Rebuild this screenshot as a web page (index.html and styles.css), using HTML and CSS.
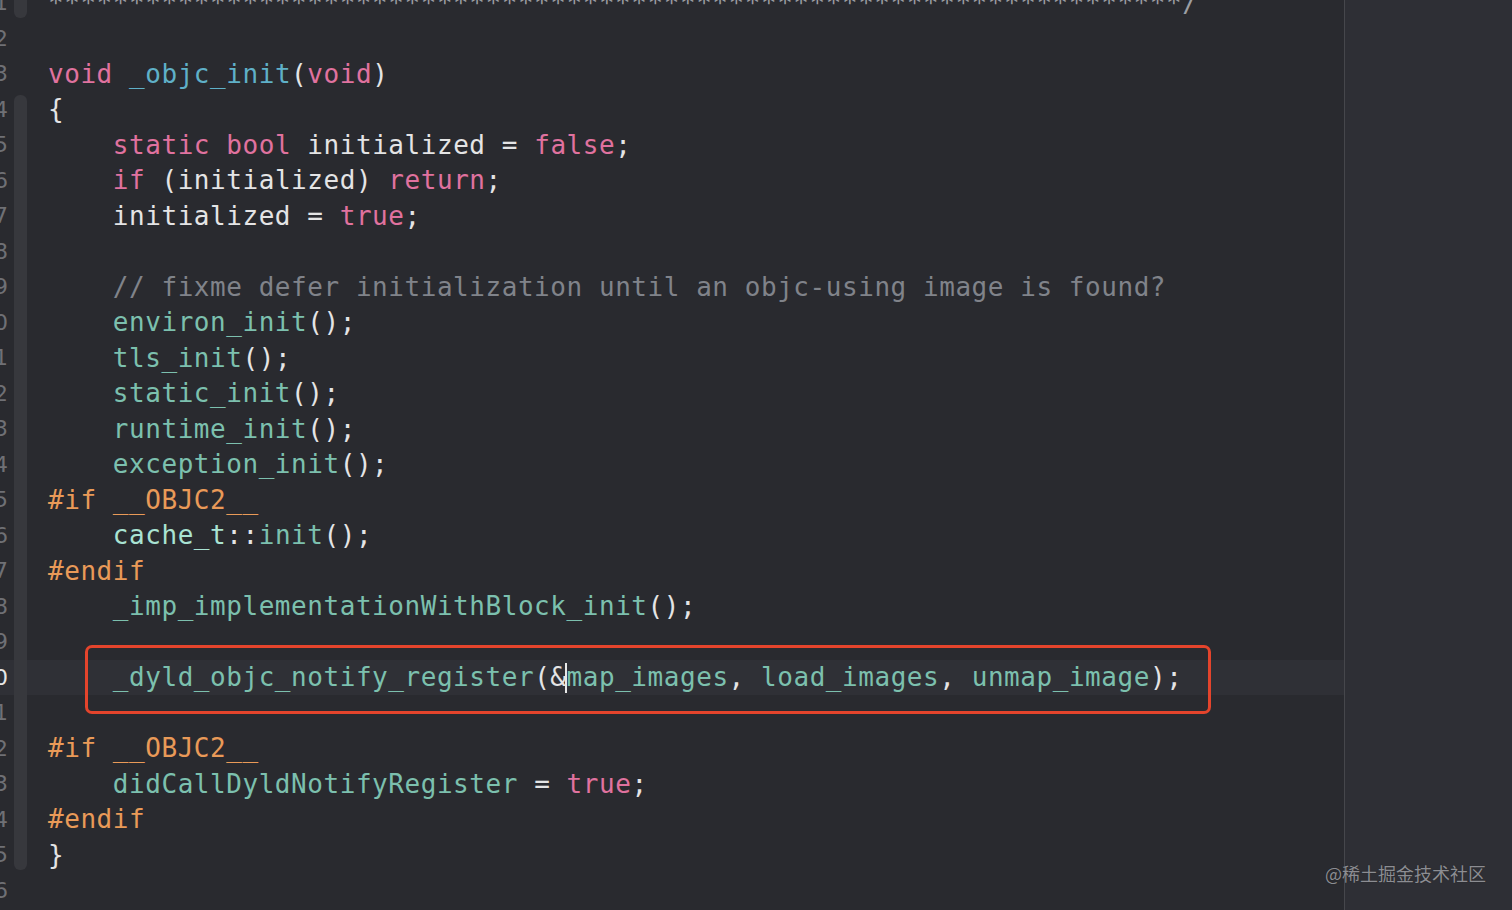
FILE: index.html
```html
<!DOCTYPE html>
<html lang="en">
<head>
<meta charset="utf-8">
<title>objc_init</title>
<link rel="stylesheet" href="styles.css">
</head>
<body>
<div class="editor">
  <div class="main">
    <div class="lines">
      <div class="row"><span class="ln">921</span><span class="fold tail"></span><span class="code"><span class="cm stars">**********************************************************************/</span></span></div>
      <div class="row"><span class="ln">922</span><span class="fold"></span><span class="code"></span></div>
      <div class="row"><span class="ln">923</span><span class="fold"></span><span class="code"><span class="kw">void</span> <span class="decl">_objc_init</span>(<span class="kw">void</span>)</span></div>
      <div class="row"><span class="ln">924</span><span class="fold on start"></span><span class="code">{</span></div>
      <div class="row"><span class="ln">925</span><span class="fold on"></span><span class="code">    <span class="kw">static</span> <span class="kw">bool</span> initialized = <span class="kw">false</span>;</span></div>
      <div class="row"><span class="ln">926</span><span class="fold on"></span><span class="code">    <span class="kw">if</span> (initialized) <span class="kw">return</span>;</span></div>
      <div class="row"><span class="ln">927</span><span class="fold on"></span><span class="code">    initialized = <span class="kw">true</span>;</span></div>
      <div class="row"><span class="ln">928</span><span class="fold on"></span><span class="code"></span></div>
      <div class="row"><span class="ln">929</span><span class="fold on"></span><span class="code">    <span class="cm">// fixme defer initialization until an objc-using image is found?</span></span></div>
      <div class="row"><span class="ln">930</span><span class="fold on"></span><span class="code">    <span class="fn">environ_init</span>();</span></div>
      <div class="row"><span class="ln">931</span><span class="fold on"></span><span class="code">    <span class="fn">tls_init</span>();</span></div>
      <div class="row"><span class="ln">932</span><span class="fold on"></span><span class="code">    <span class="fn">static_init</span>();</span></div>
      <div class="row"><span class="ln">933</span><span class="fold on"></span><span class="code">    <span class="fn">runtime_init</span>();</span></div>
      <div class="row"><span class="ln">934</span><span class="fold on"></span><span class="code">    <span class="fn">exception_init</span>();</span></div>
      <div class="row"><span class="ln">935</span><span class="fold on"></span><span class="code"><span class="pp">#if __OBJC2__</span></span></div>
      <div class="row"><span class="ln">936</span><span class="fold on"></span><span class="code">    <span class="ty">cache_t</span>::<span class="fn">init</span>();</span></div>
      <div class="row"><span class="ln">937</span><span class="fold on"></span><span class="code"><span class="pp">#endif</span></span></div>
      <div class="row"><span class="ln">938</span><span class="fold on"></span><span class="code">    <span class="fn">_imp_implementationWithBlock_init</span>();</span></div>
      <div class="row"><span class="ln">939</span><span class="fold on"></span><span class="code"></span></div>
      <div class="row current"><span class="ln">940</span><span class="fold on"></span><span class="code">    <span class="fn">_dyld_objc_notify_register</span>(&amp;<span class="cursor"></span><span class="fn">map_images</span>, <span class="fn">load_images</span>, <span class="fn">unmap_image</span>);</span></div>
      <div class="row"><span class="ln">941</span><span class="fold on"></span><span class="code"></span></div>
      <div class="row"><span class="ln">942</span><span class="fold on"></span><span class="code"><span class="pp">#if __OBJC2__</span></span></div>
      <div class="row"><span class="ln">943</span><span class="fold on"></span><span class="code">    <span class="fn">didCallDyldNotifyRegister</span> = <span class="kw">true</span>;</span></div>
      <div class="row"><span class="ln">944</span><span class="fold on"></span><span class="code"><span class="pp">#endif</span></span></div>
      <div class="row"><span class="ln">945</span><span class="fold on end"></span><span class="code">}</span></div>
      <div class="row"><span class="ln">946</span><span class="fold"></span><span class="code"></span></div>
    </div>
    <div class="mark"></div>
  </div>
  <div class="minimap"></div>
  <div class="watermark">@稀土掘金技术社区</div>
</div>
</body>
</html>
```

FILE: styles.css
```css
* { box-sizing: border-box; }
html, body { margin: 0; padding: 0; }
body {
  background: #292a2f;
  overflow: hidden;
}
.editor {
  position: relative;
  display: flex;
  width: 1512px;
  height: 910px;
  overflow: hidden;
  background: #292a2f;
}
.main {
  position: relative;
  width: 1345px;
  flex: none;
  border-right: 1px solid #46474c;
  overflow: hidden;
}
.minimap {
  flex: 1;
  background: #2e2f35;
}
.lines {
  margin-top: -15px;
  display: flex;
  flex-direction: column;
}
.row {
  display: flex;
  align-items: center;
  height: 35.5px;
  flex: none;
}
.row.current { background: #2f3036; }
.ln {
  flex: none;
  width: 44px;
  margin-left: -36px;
  text-align: right;
  font-family: "DejaVu Sans", sans-serif;
  font-size: 22px;
  color: #6f7075;
}
.row.current .ln { color: #e6e6e6; }
.fold {
  flex: none;
  width: 13px;
  align-self: stretch;
  margin-left: 6px;
  margin-right: 21px;
}
.fold.on { background: #37383d; }
.fold.tail {
  background: #37383d;
  margin-bottom: 3px;
  border-radius: 0 0 6px 6px;
}
.fold.start {
  margin-top: 3px;
  border-radius: 6px 6px 0 0;
}
.fold.end {
  margin-bottom: 3px;
  border-radius: 0 0 6px 6px;
}
.code {
  white-space: pre;
  font-family: "DejaVu Sans Mono", monospace;
  font-size: 26px;
  letter-spacing: 0.55px;
  color: #e4e4e5;
}
.kw { color: #e0729f; }
.decl { color: #5fb0c8; }
.fn { color: #7cc0ae; }
.ty { color: #a9e3d3; }
.pp { color: #e99a58; }
.cm { color: #80838a; }
.cm.stars { color: #9c9ea3; }
.cursor {
  display: inline-block;
  width: 0;
  height: 30px;
  margin-left: -2px;
  border-left: 2px solid #e8e8e8;
  vertical-align: middle;
}
.mark {
  position: absolute;
  left: 85px;
  top: 645px;
  width: 1126px;
  height: 69px;
  border: 3px solid #e4442c;
  border-radius: 7px;
}
.watermark {
  position: absolute;
  right: 26px;
  bottom: 26px;
  font-family: "Noto Sans CJK SC", sans-serif;
  font-size: 18px;
  line-height: 22px;
  color: #8c8d92;
  text-shadow: 0 0 1px rgba(0,0,0,0.4);
}
```
